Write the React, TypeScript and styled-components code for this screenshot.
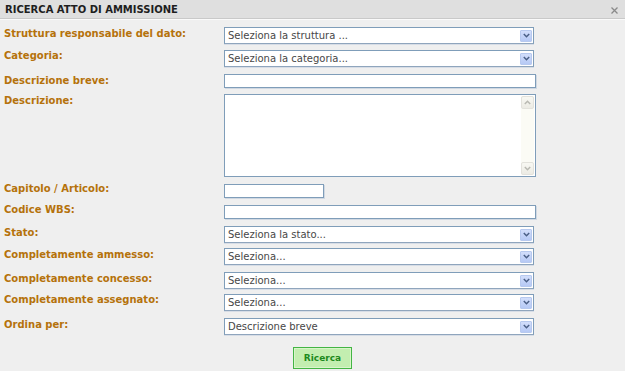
import React from "react";
import styled, { createGlobalStyle } from "styled-components";

const Global = createGlobalStyle`
  html, body { margin: 0; padding: 0; background: #efefef; }
  body { font-family: "DejaVu Sans", Verdana, sans-serif; }
  #root { width: 625px; height: 371px; overflow: hidden; }
`;

const Page = styled.div`
  width: 625px;
  height: 371px;
  background: #efefef;
  display: flex;
  flex-direction: column;
`;

const TitleBar = styled.div`
  height: 18px;
  background: #dfdfdf;
  border-bottom: 1px solid #c9c9c9;
  box-shadow: 0 1px 0 #fafafa;
  display: flex;
  align-items: center;
  justify-content: space-between;
  padding: 0 7px 0 5px;
`;

const Title = styled.div`
  font-family: "DejaVu Sans", Verdana, sans-serif;
  font-weight: bold;
  font-size: 10px;
  color: #1e1e1e;
`;

const Close = styled.svg`
  width: 7px;
  height: 7px;
  margin-top: 3px;
`;

const Form = styled.div`
  display: grid;
  grid-template-columns: 224px 1fr;
  align-items: start;
  padding-top: 8px;
`;

const Label = styled.div<{ $shift: number }>`
  font-family: "DejaVu Sans", Verdana, sans-serif;
  font-weight: bold;
  font-size: 10px;
  line-height: 13px;
  color: #b5720b;
  padding-left: 4px;
  margin-top: ${(p) => p.$shift}px;
`;

const Cell = styled.div<{ $gap: number }>`
  margin-bottom: ${(p) => p.$gap}px;
  display: flex;
`;

const SelectBox = styled.div`
  box-sizing: border-box;
  width: 310px;
  height: 17px;
  background: #fff;
  border: 1px solid #7f9db9;
  border-bottom-color: #8fa5bd;
  box-shadow: 0 1px 0 #d7dde6;
  display: flex;
  align-items: center;
  justify-content: space-between;
  padding: 0 1px 0 3px;
  font-family: "DejaVu Sans", Tahoma, sans-serif;
  font-size: 10px;
  color: #474747;
`;

const Arrow = styled.div`
  box-sizing: border-box;
  width: 12px;
  height: 12px;
  border: 1px solid #b7c9ef;
  border-radius: 1px;
  background: linear-gradient(#d2defb, #b6c9f5);
  display: flex;
  align-items: center;
  justify-content: center;
`;

const TextInput = styled.div<{ $w: number }>`
  box-sizing: border-box;
  width: ${(p) => p.$w}px;
  height: 14px;
  background: #fff;
  border: 1px solid #7f9db9;
  box-shadow: 1px 1px 0 #d0d8e2;
`;

const Area = styled.div`
  box-sizing: border-box;
  width: 312px;
  height: 83px;
  background: #fff;
  border: 1px solid #7f9db9;
  display: flex;
  justify-content: flex-end;
  padding: 1px;
`;

const Scroll = styled.div`
  width: 13px;
  background: #fbfbf5;
  display: flex;
  flex-direction: column;
  justify-content: space-between;
`;

const ScrollBtn = styled.div`
  box-sizing: border-box;
  height: 13px;
  background: linear-gradient(#f8f8f3, #ecebe4);
  border: 1px solid #e3e2dc;
  border-radius: 2px;
  display: flex;
  align-items: center;
  justify-content: center;
`;

const ButtonRow = styled.div`
  padding: 11px 0 0 293px;
`;

const Button = styled.button`
  box-sizing: border-box;
  width: 59px;
  height: 22px;
  background: #c3eeb0;
  border: 1px solid #44b544;
  box-shadow: inset 0 0 0 1px #d9f6cb;
  font-family: "DejaVu Sans", Verdana, sans-serif;
  font-weight: bold;
  font-size: 9px;
  color: #1d8a1d;
  padding: 0;
`;

const Chevron = ({ color = "#4a5f86", up = false }: { color?: string; up?: boolean }) => (
  <svg width="7" height="5" viewBox="0 0 7 5">
    <path
      d={up ? "M0.8 4 L3.5 1.3 L6.2 4" : "M0.8 1 L3.5 3.7 L6.2 1"}
      fill="none"
      stroke={color}
      strokeWidth="1.5"
    />
  </svg>
);

const Select = ({ text }: { text: string }) => (
  <SelectBox>
    <span>{text}</span>
    <Arrow>
      <Chevron />
    </Arrow>
  </SelectBox>
);

type Row = {
  label: string;
  kind: "select" | "input" | "short" | "area";
  text?: string;
  gap: number;
  shift: number;
};

const rows: Row[] = [
  { label: "Struttura responsabile del dato:", kind: "select", text: "Seleziona la struttura ...", gap: 6, shift: 0 },
  { label: "Categoria:", kind: "select", text: "Seleziona la categoria...", gap: 7, shift: -1 },
  { label: "Descrizione breve:", kind: "input", gap: 6, shift: 0 },
  { label: "Descrizione:", kind: "area", gap: 7, shift: 0 },
  { label: "Capitolo / Articolo:", kind: "short", gap: 7, shift: -2 },
  { label: "Codice WBS:", kind: "input", gap: 7, shift: -2 },
  { label: "Stato:", kind: "select", text: "Seleziona la stato...", gap: 5, shift: 0 },
  { label: "Completamente ammesso:", kind: "select", text: "Seleziona...", gap: 7, shift: 0 },
  { label: "Completamente concesso:", kind: "select", text: "Seleziona...", gap: 5, shift: 0 },
  { label: "Completamente assegnato:", kind: "select", text: "Seleziona...", gap: 7, shift: -1 },
  { label: "Ordina per:", kind: "select", text: "Descrizione breve", gap: 0, shift: 0 },
];

export default function App() {
  return (
    <Page>
      <Global />
      <TitleBar>
        <Title>RICERCA ATTO DI AMMISSIONE</Title>
        <Close viewBox="0 0 7 7">
          <path d="M0.5 0.5 L6.5 6.5 M6.5 0.5 L0.5 6.5" stroke="#8a8a8a" strokeWidth="1.3" />
        </Close>
      </TitleBar>
      <Form>
        {rows.map((r) => (
          <React.Fragment key={r.label}>
            <Label $shift={r.shift}>{r.label}</Label>
            <Cell $gap={r.gap}>
              {r.kind === "select" && <Select text={r.text || ""} />}
              {r.kind === "input" && <TextInput $w={312} />}
              {r.kind === "short" && <TextInput $w={100} />}
              {r.kind === "area" && (
                <Area>
                  <Scroll>
                    <ScrollBtn>
                      <Chevron color="#b9b9b2" up />
                    </ScrollBtn>
                    <ScrollBtn>
                      <Chevron color="#b9b9b2" />
                    </ScrollBtn>
                  </Scroll>
                </Area>
              )}
            </Cell>
          </React.Fragment>
        ))}
      </Form>
      <ButtonRow>
        <Button>Ricerca</Button>
      </ButtonRow>
    </Page>
  );
}
